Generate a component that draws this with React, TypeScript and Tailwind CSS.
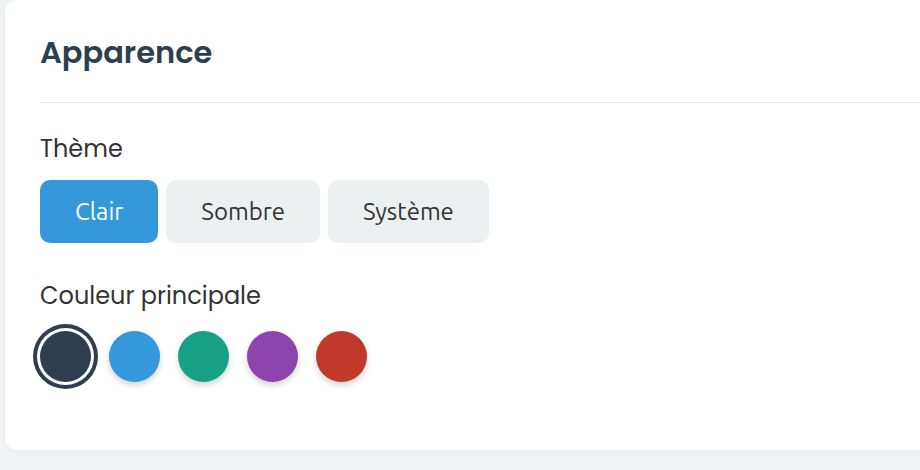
import React, { useState } from 'react';

const themes = ['Clair', 'Sombre', 'Système'];

const colors = [
  { name: 'dark', className: 'bg-[#2c3e50]' },
  { name: 'blue', className: 'bg-[#3498db]' },
  { name: 'green', className: 'bg-[#16a085]' },
  { name: 'purple', className: 'bg-[#8e44ad]' },
  { name: 'red', className: 'bg-[#c0392b]' },
];

const App: React.FC = () => {
  const [theme, setTheme] = useState('Clair');
  const [color, setColor] = useState('dark');

  return (
    <div className="min-h-[470px] w-[920px] bg-[#f1f2f6] pl-[5px] overflow-hidden">
      <div className="h-[450px] w-[960px] rounded-xl bg-white px-[35px] shadow-[0_1px_4px_rgba(0,0,0,0.04)]">
        {/* titre */}
        <h2 className="pt-[30px] pb-[26px] text-[30.5px] leading-[46px] font-semibold text-[#2c3e50] font-['Poppins','Inter',sans-serif]">
          Apparence
        </h2>
        <div className="border-t border-[#e2e8ec]" />

        {/* thème */}
        <div className="mt-[31px] text-[24px] leading-[30px] text-[#333] font-['Poppins','Inter',sans-serif]">
          Thème
        </div>
        <div className="mt-[16px] flex gap-[8px]">
          {themes.map(t => (
            <button
              key={t}
              onClick={() => setTheme(t)}
              className={`h-[63px] rounded-[10px] px-[35px] text-[24px] font-['Ubuntu','Noto_Sans',sans-serif] ${
                theme === t ? 'bg-[#3498db] text-white' : 'bg-[#ecf0f1] text-[#333]'
              }`}
            >
              {t}
            </button>
          ))}
        </div>

        {/* couleur */}
        <div className="mt-[38px] text-[24px] leading-[30px] text-[#333] font-['Poppins','Inter',sans-serif]">
          Couleur principale
        </div>
        <div className="mt-[20px] flex items-center gap-[18px]">
          {colors.map(c => (
            <button
              key={c.name}
              onClick={() => setColor(c.name)}
              className={`h-[51px] w-[51px] rounded-full ${c.className} ${
                color === c.name
                  ? 'shadow-[0_0_0_3px_#fff,0_0_0_7px_#2c3e50]'
                  : 'shadow-[0_3px_6px_rgba(0,0,0,0.18)]'
              }`}
            />
          ))}
        </div>
      </div>
    </div>
  );
};

export default App;
